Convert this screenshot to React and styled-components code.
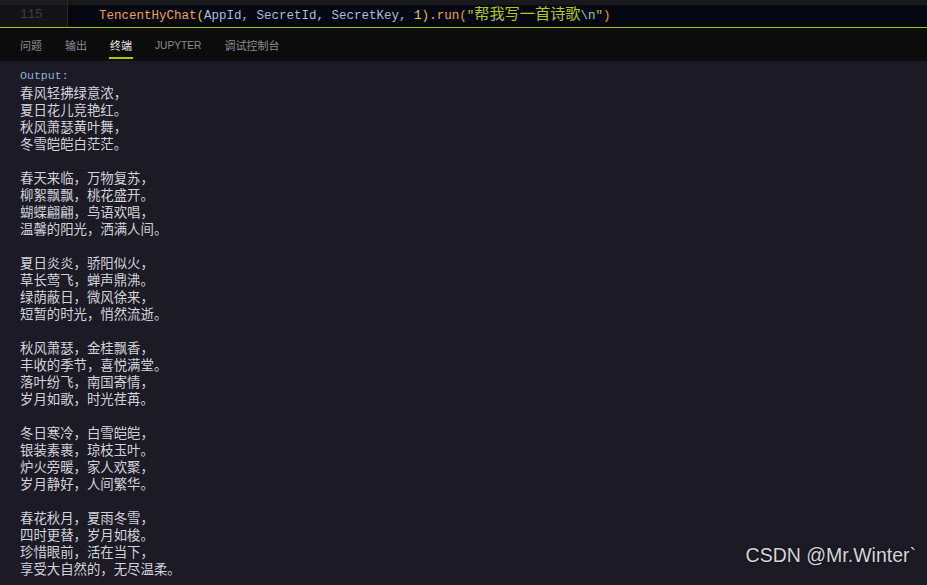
import React from 'react'
import styled, { createGlobalStyle } from 'styled-components'

const Global = createGlobalStyle`
  html, body {
    margin: 0;
    padding: 0;
    background: #1b1a25;
  }
`

const Page = styled.div`
  position: relative;
  width: 927px;
  height: 585px;
  overflow: hidden;
  display: flex;
  flex-direction: column;
  background: #1b1a25;
`

const Editor = styled.div`
  display: flex;
  flex-direction: column;
  border-bottom: 1px solid #a3c21c;
`

const EditorRow = styled.div`
  display: flex;
  height: ${p => p.h}px;
  overflow: hidden;
`

const Gutter = styled.div`
  width: 68px;
  flex: none;
  box-sizing: border-box;
  padding-left: 20px;
  border-right: 1px solid #2b2b2e;
  background: ${p => p.bg};
  color: #3b3f47;
  font-family: "Liberation Mono", monospace;
  font-size: 12.5px;
  line-height: 21px;
`

const CodeArea = styled.div`
  flex: 1;
  padding-left: 31px;
  background: ${p => p.bg};
  font-family: "Liberation Mono", monospace;
  font-size: 12.5px;
  line-height: 21px;
  white-space: pre;
  color: #a9bedc;
`

const Tok = styled.span`
  color: ${p => p.c};
`

const Cjk = styled.span`
  color: #b3c724;
  font-family: "Noto Sans CJK SC", sans-serif;
  font-size: 15.2px;
  line-height: 1;
`

const TabBar = styled.div`
  height: 33px;
  flex: none;
  display: flex;
  align-items: stretch;
  gap: 23px;
  padding-left: 20px;
  background: #0c0c0d;
`

const Tab = styled.div`
  display: flex;
  align-items: center;
  padding-top: 5px;
  font-family: ${p => (p.latin ? '"Liberation Sans", sans-serif' : '"Noto Sans CJK SC", sans-serif')};
  font-size: ${p => (p.latin ? '10.2px' : '11px')};
  color: ${p => (p.active ? '#e6e6e6' : '#8b8b8f')};
  border-bottom: 2px solid ${p => (p.active ? '#a9c80a' : 'transparent')};
  margin-bottom: 2px;
  padding-left: ${p => (p.active ? '1px' : '0')};
  padding-right: ${p => (p.active ? '1px' : '0')};
  margin-left: ${p => (p.active ? '-1px' : '0')};
  margin-right: ${p => (p.active ? '-1px' : '0')};
`

const Terminal = styled.div`
  flex: 1;
  padding: 6px 20px 0;
  font-family: "Liberation Mono", "Noto Sans CJK SC", monospace;
  font-size: 13.4px;
  line-height: 17px;
  color: #d2d3d9;
  white-space: pre;
`

const OutputLabel = styled.div`
  color: #8fb1dc;
  font-size: 11.6px;
  height: 17px;
`

const Line = styled.div`
  height: 17px;
  font-family: "Noto Sans CJK SC", sans-serif;
`

const Watermark = styled.div`
  position: absolute;
  right: 11px;
  bottom: 18px;
  font-family: "Liberation Sans", sans-serif;
  font-size: 19.5px;
  color: #d4d4d8;
  text-shadow: 0 0 2px rgba(0, 0, 0, 0.6);
`

const poem = [
  '春风轻拂绿意浓，',
  '夏日花儿竞艳红。',
  '秋风萧瑟黄叶舞，',
  '冬雪皑皑白茫茫。',
  '',
  '春天来临，万物复苏，',
  '柳絮飘飘，桃花盛开。',
  '蝴蝶翩翩，鸟语欢唱，',
  '温馨的阳光，洒满人间。',
  '',
  '夏日炎炎，骄阳似火，',
  '草长莺飞，蝉声鼎沸。',
  '绿荫蔽日，微风徐来，',
  '短暂的时光，悄然流逝。',
  '',
  '秋风萧瑟，金桂飘香，',
  '丰收的季节，喜悦满堂。',
  '落叶纷飞，南国寄情，',
  '岁月如歌，时光荏苒。',
  '',
  '冬日寒冷，白雪皑皑，',
  '银装素裹，琼枝玉叶。',
  '炉火旁暖，家人欢聚，',
  '岁月静好，人间繁华。',
  '',
  '春花秋月，夏雨冬雪，',
  '四时更替，岁月如梭。',
  '珍惜眼前，活在当下，',
  '享受大自然的，无尽温柔。',
]

const tabs = [
  { label: '问题' },
  { label: '输出' },
  { label: '终端', active: true },
  { label: 'JUPYTER', latin: true },
  { label: '调试控制台' },
]

export default function App() {
  return (
    <Page>
      <Global />
      <Editor>
        <EditorRow h={5}>
          <Gutter bg="#1c1c1f" />
          <CodeArea bg="#19191b" />
        </EditorRow>
        <EditorRow h={22}>
          <Gutter bg="#131315">115</Gutter>
          <CodeArea bg="#050811">
            <Tok c="#f2a04e">TencentHyChat</Tok>
            <Tok c="#e9c21c">(</Tok>
            AppId, SecretId, SecretKey, <Tok c="#d3d84a">1</Tok>
            <Tok c="#e9c21c">)</Tok>.<Tok c="#f2a04e">run</Tok>
            <Tok c="#e9a21c">(</Tok>
            <Tok c="#b3c724">"</Tok>
            <Cjk>帮我写一首诗歌</Cjk>
            <Tok c="#7fd0c0">\n</Tok>
            <Tok c="#b3c724">"</Tok>
            <Tok c="#e9a21c">)</Tok>
          </CodeArea>
        </EditorRow>
      </Editor>
      <TabBar>
        {tabs.map(t => (
          <Tab key={t.label} active={t.active} latin={t.latin}>
            {t.label}
          </Tab>
        ))}
      </TabBar>
      <Terminal>
        <OutputLabel>Output:</OutputLabel>
        {poem.map((l, i) => (
          <Line key={i}>{l}</Line>
        ))}
      </Terminal>
      <Watermark>CSDN @Mr.Winter`</Watermark>
    </Page>
  )
}
